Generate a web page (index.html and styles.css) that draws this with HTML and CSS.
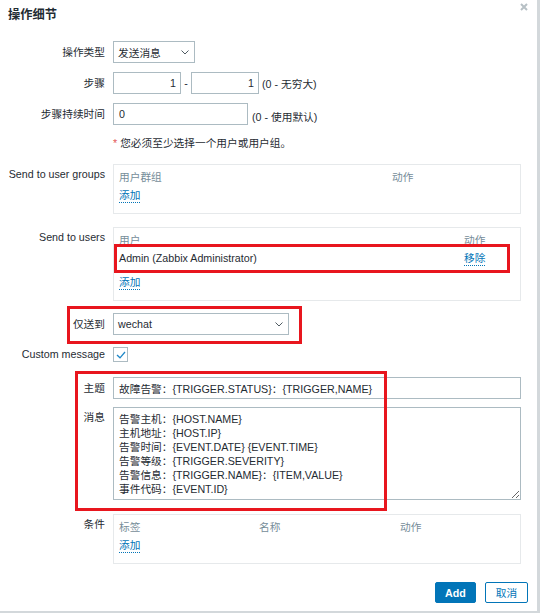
FILE: index.html
```html
<!DOCTYPE html>
<html lang="zh">
<head>
<meta charset="UTF-8" />
<title>操作细节</title>
<link rel="stylesheet" href="styles.css">
</head>
<body>

<div class="dialog">
  <div class="dialog-head">
    <h4>操作细节</h4>
    <svg class="close" width="8" height="8" viewBox="0 0 8 8"><path d="M1 1L7 7M7 1L1 7" stroke="#b7c0c5" stroke-width="2"/></svg>
  </div>

  <div class="form">
    <div class="row">
      <label>操作类型</label>
      <div class="field">
        <div class="select select-type">发送消息<svg width="8" height="5" viewBox="0 0 8 5"><path d="M0.5 0.5L4 4L7.5 0.5" fill="none" stroke="#4f5b62"/></svg></div>
      </div>
    </div>

    <div class="row row-gap">
      <label>步骤</label>
      <div class="field">
        <input class="input input-num" type="text" value="1" />
        <span class="dash">-</span>
        <input class="input input-num" type="text" value="1" />
        <span class="hint">(0 - 无穷大)</span>
      </div>
    </div>

    <div class="row row-gap">
      <label>步骤持续时间</label>
      <div class="field">
        <input class="input input-dur" type="text" value="0" />
        <span class="hint hint-low">(0 - 使用默认)</span>
      </div>
    </div>

    <div class="note"><span class="req">*</span> 您必须至少选择一个用户或用户组。</div>

    <div class="row row-groups">
      <label>Send to user groups</label>
      <div class="box box-groups">
        <div class="cols cols-groups head"><span>用户群组</span><span>动作</span></div>
        <div class="line"><a class="link">添加</a></div>
      </div>
    </div>

    <div class="row row-users">
      <label>Send to users</label>
      <div class="box box-users">
        <div class="cols cols-users head"><span>用户</span><span>动作</span></div>
        <div class="cols cols-users line"><span>Admin (Zabbix Administrator)</span><span><a class="link">移除</a></span></div>
        <div class="line line-add"><a class="link">添加</a></div>
      </div>
    </div>

    <div class="row row-media">
      <label>仅送到</label>
      <div class="field">
        <div class="select select-media">wechat<svg width="8" height="5" viewBox="0 0 8 5"><path d="M0.5 0.5L4 4L7.5 0.5" fill="none" stroke="#4f5b62"/></svg></div>
      </div>
    </div>

    <div class="row row-check">
      <label>Custom message</label>
      <div class="field">
        <span class="check"><svg width="10" height="8" viewBox="0 0 10 8"><path d="M1 4L4 6.8L9 1" fill="none" stroke="#1e87c8" stroke-width="1.3"/></svg></span>
      </div>
    </div>

    <div class="row row-subject">
      <label>主题</label>
      <div class="field">
        <input class="input input-wide" type="text" value="故障告警：{TRIGGER.STATUS}：{TRIGGER,NAME}" />
      </div>
    </div>

    <div class="row row-message">
      <label>消息</label>
      <div class="field">
        <textarea class="textarea">告警主机：{HOST.NAME}
主机地址：{HOST.IP}
告警时间：{EVENT.DATE} {EVENT.TIME}
告警等级：{TRIGGER.SEVERITY}
告警信息：{TRIGGER.NAME}：{ITEM,VALUE}
事件代码：{EVENT.ID}</textarea>
      </div>
    </div>

    <div class="row row-cond">
      <label>条件</label>
      <div class="box box-cond">
        <div class="cols cols-cond head"><span>标签</span><span>名称</span><span>动作</span></div>
        <div class="line"><a class="link">添加</a></div>
      </div>
    </div>
  </div>

  <div class="footer">
    <button class="btn btn-add">Add</button>
    <button class="btn btn-cancel">取消</button>
  </div>

  <!-- красные рамки поверх формы -->
  <div class="mark mark-user"></div>
  <div class="mark mark-media"></div>
  <div class="mark mark-msg"></div>
</div>

</body>
</html>
```

FILE: styles.css
```css
body {
  margin: 0;
  background: #d3d8db;
  font-family: "Liberation Sans", "Noto Sans CJK SC", sans-serif;
  font-size: 10.7px;
  color: #1f2c33;
}
.dialog {
  position: relative;
  width: 537px;
  height: 611px;
  background: #fff;
}
.dialog-head {
  display: flex;
  justify-content: space-between;
  align-items: flex-start;
  height: 23px;
  padding: 7px 9px 0 8px;
  box-sizing: border-box;
}
.dialog-head h4 {
  margin: 0;
  font-size: 12.25px;
  line-height: 16px;
  font-weight: bold;
}
.close {
  margin-top: -4px;
}
.form {
  padding-top: 18px;
}
.row {
  display: grid;
  grid-template-columns: 105px 408px;
  column-gap: 8px;
}
.row > label {
  text-align: right;
  line-height: 22px;
  white-space: nowrap;
}
.field {
  display: flex;
  align-items: center;
}
.row-gap { margin-top: 9px; }
.row-groups { margin-top: 14px; }
.row-groups > label { line-height: 20px; }
.row-users { margin-top: 13px; }
.row-users > label { line-height: 20px; }
.row-media { margin-top: 12px; }
.row-check { margin-top: 12px; }
.row-check > label { line-height: 14px; }
.row-subject { margin-top: 15px; }
.row-message { margin-top: 8px; }
.row-message > label { line-height: 20px; }
.row-cond { margin-top: 14px; }
.row-cond > label { line-height: 20px; }

.select {
  display: flex;
  justify-content: space-between;
  align-items: center;
  height: 22px;
  padding: 0 5px 0 4px;
  border: 1px solid #acbbc2;
  box-sizing: border-box;
  background: #fff;
}
.select-type { width: 82px; }
.select-media { width: 176px; }

.input {
  height: 22px;
  padding: 0 5px;
  border: 1px solid #acbbc2;
  box-sizing: border-box;
  font: inherit;
  color: #1f2c33;
  outline: none;
}
.input-num {
  width: 68px;
  text-align: right;
  padding-right: 4px;
}
.input-dur { width: 135px; }
.input-wide { width: 408px; }
.dash {
  width: 10px;
  text-align: center;
}
.hint {
  margin-left: 3px;
  white-space: nowrap;
}
.hint-low {
  margin-left: 4px;
  padding-top: 4px;
}
.note {
  margin: 11px 0 0 113px;
  line-height: 14px;
}
.req {
  color: #e45959;
}

.box {
  border: 1px solid #e6e9eb;
  padding: 3px 5px 0;
  box-sizing: border-box;
}
.box-groups { height: 50px; }
.box-users { height: 74px; }
.box-cond { height: 50px; }
.cols {
  display: grid;
}
.cols-groups { grid-template-columns: 273px 1fr; }
.cols-users { grid-template-columns: 345px 1fr; }
.cols-cond { grid-template-columns: 140px 141px 1fr; }
.head {
  color: #768d99;
  line-height: 18px;
}
.line {
  line-height: 19px;
}
.line-add {
  margin-top: 5px;
}
.link {
  display: inline-block;
  line-height: 13px;
  color: #0275b8;
  border-bottom: 1px dotted #0275b8;
  cursor: pointer;
}

.check {
  display: flex;
  justify-content: center;
  align-items: center;
  width: 15px;
  height: 15px;
  border: 1px solid #acbbc2;
  box-sizing: border-box;
}
.textarea {
  width: 408px;
  height: 93px;
  padding: 4px 5px;
  border: 1px solid #acbbc2;
  box-sizing: border-box;
  font: inherit;
  line-height: 14px;
  color: #1f2c33;
  resize: vertical;
  outline: none;
}

.footer {
  display: flex;
  justify-content: flex-end;
  gap: 9px;
  margin-top: 18px;
  padding-right: 9px;
}
.btn {
  height: 21px;
  padding: 0 8px;
  border: 1px solid #0275b8;
  border-radius: 2px;
  font: inherit;
  cursor: pointer;
}
.btn-add {
  width: 41px;
  background: #0275b8;
  color: #fff;
  font-weight: bold;
}
.btn-cancel {
  width: 43px;
  background: #fff;
  color: #0275b8;
}

.mark {
  position: absolute;
  border: 3px solid #e8161e;
  box-sizing: border-box;
  pointer-events: none;
}
.mark-user {
  left: 114px;
  top: 244px;
  width: 396px;
  height: 29px;
}
.mark-media {
  left: 67px;
  top: 306px;
  width: 235px;
  height: 38px;
}
.mark-msg {
  left: 75px;
  top: 371px;
  width: 312px;
  height: 140px;
}
```
